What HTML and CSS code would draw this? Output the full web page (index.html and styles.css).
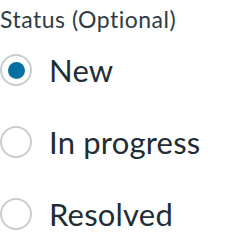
FILE: index.html
```html
<!DOCTYPE html>
<html lang="en">
<head>
    <meta charset="UTF-8">
    <title>Status</title>
    <link rel="stylesheet" href="styles.css">
</head>
<body>
    <fieldset class="status-group">
        <legend class="status-label">Status (Optional)</legend>
        <label class="radio-row">
            <input type="radio" name="status" value="new" checked>
            <span class="radio-facade"></span>
            <span class="radio-text">New</span>
        </label>
        <label class="radio-row">
            <input type="radio" name="status" value="in_progress">
            <span class="radio-facade"></span>
            <span class="radio-text">In progress</span>
        </label>
        <label class="radio-row">
            <input type="radio" name="status" value="resolved">
            <span class="radio-facade"></span>
            <span class="radio-text">Resolved</span>
        </label>
    </fieldset>
</body>
</html>
```
FILE: styles.css
```css
* {
    margin: 0;
    padding: 0;
    box-sizing: border-box;
    font-family: Lato, "Open Sans", sans-serif;
}

body {
    background-color: #fff;
    color: #2d3b45;
}

.status-group {
    border: none;
    display: flex;
    flex-direction: column;
}

.status-label {
    font-size: 23px;
    line-height: 38px;
    letter-spacing: 0.5px;
    color: #2d3b45;
}

.radio-row {
    display: flex;
    align-items: center;
    gap: 17px;
    height: 72px;
    margin-top: -4px;
}

.radio-row + .radio-row {
    margin-top: 0;
}

.radio-row input {
    display: none;
}

.radio-facade {
    width: 32px;
    height: 32px;
    border: 2px solid #c7cdd1;
    border-radius: 50%;
    display: flex;
    align-items: center;
    justify-content: center;
    flex-shrink: 0;
}

.radio-row input:checked + .radio-facade::after {
    content: "";
    width: 17px;
    height: 17px;
    border-radius: 50%;
    background-color: #0770a3;
}

.radio-text {
    font-size: 31px;
    letter-spacing: 0.2px;
    color: #1f2d36;
}
```
